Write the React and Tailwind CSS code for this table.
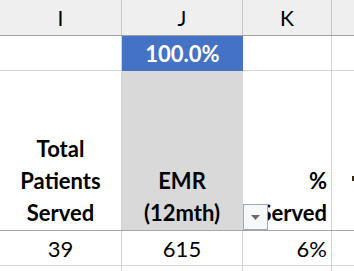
import React from 'react';

const font = { fontFamily: 'Lato, "Liberation Sans", sans-serif' };

export default function App() {
  return (
    <div className="w-[354px] h-[271px] overflow-hidden bg-white text-black" style={font}>
      {/* Column letters */}
      <div className="grid grid-cols-[122px_121px_89px_1fr] h-[36px] bg-[#efefef] border-b border-[#9e9e9e] text-[21px]">
        <div className="flex items-center justify-center border-r border-[#c6c6c6]">I</div>
        <div className="flex items-center justify-center border-r border-[#c6c6c6]">J</div>
        <div className="flex items-center justify-center border-r border-[#c6c6c6]">K</div>
        <div />
      </div>

      {/* Percent row */}
      <div className="grid grid-cols-[122px_121px_89px_1fr] h-[35px] text-[22px]">
        <div className="border-r border-b border-[#d4d4d4]" />
        <div className="flex items-center justify-center bg-[#4472c4] text-white font-bold border-b border-[#4472c4]">
          100.0%
        </div>
        <div className="border-r border-b border-[#d4d4d4]" />
        <div className="border-b border-[#d4d4d4]" />
      </div>

      {/* Header text row */}
      <div className="grid grid-cols-[122px_121px_89px_1fr] h-[160px] border-b border-[#a6a6a6] text-[22px] font-bold leading-[32px]">
        <div className="flex flex-col justify-end items-center pb-[1px] border-r border-[#d4d4d4]">
          <span>Total</span>
          <span>Patients</span>
          <span>Served</span>
        </div>
        <div className="flex flex-col justify-end items-center pb-[1px] bg-[#d9d9d9] border-r border-[#d9d9d9]">
          <span>EMR</span>
          <span>(12mth)</span>
        </div>
        <div className="relative flex flex-col justify-end items-end pr-[4px] pb-[1px] border-r border-[#d4d4d4]">
          <span>%</span>
          <span>Served</span>
          <div className="absolute left-0 bottom-0 w-[25px] h-[26px] bg-[#f7f8fa] border border-[#a3a8b0] flex items-center justify-center">
            <svg width="9" height="5" viewBox="0 0 9 5">
              <path d="M0 0h9L4.5 5z" fill="#6b6b6b" />
            </svg>
          </div>
        </div>
        <div className="relative">
          <span className="absolute left-[20px] top-[105px] w-[2px] h-[5px] bg-[#3a2a10]" />
        </div>
      </div>

      {/* Data row */}
      <div className="grid grid-cols-[122px_121px_89px_1fr] h-[35px] text-[22px] border-b border-[#d4d4d4]">
        <div className="flex items-center justify-center border-r border-[#d4d4d4]">39</div>
        <div className="flex items-center justify-center border-r border-[#d4d4d4]">615</div>
        <div className="flex items-center justify-end pr-[4px] border-r border-[#d4d4d4]">6%</div>
        <div />
      </div>

      {/* Next row, mostly cut off */}
      <div className="grid grid-cols-[122px_121px_89px_1fr] h-[35px] text-[22px] leading-none">
        <div className="border-r border-[#d4d4d4]" />
        <div className="border-r border-[#d4d4d4]" />
        <div className="flex items-start justify-end pt-[2px] pr-[4px] border-r border-[#d4d4d4]">%</div>
        <div />
      </div>
    </div>
  );
}
